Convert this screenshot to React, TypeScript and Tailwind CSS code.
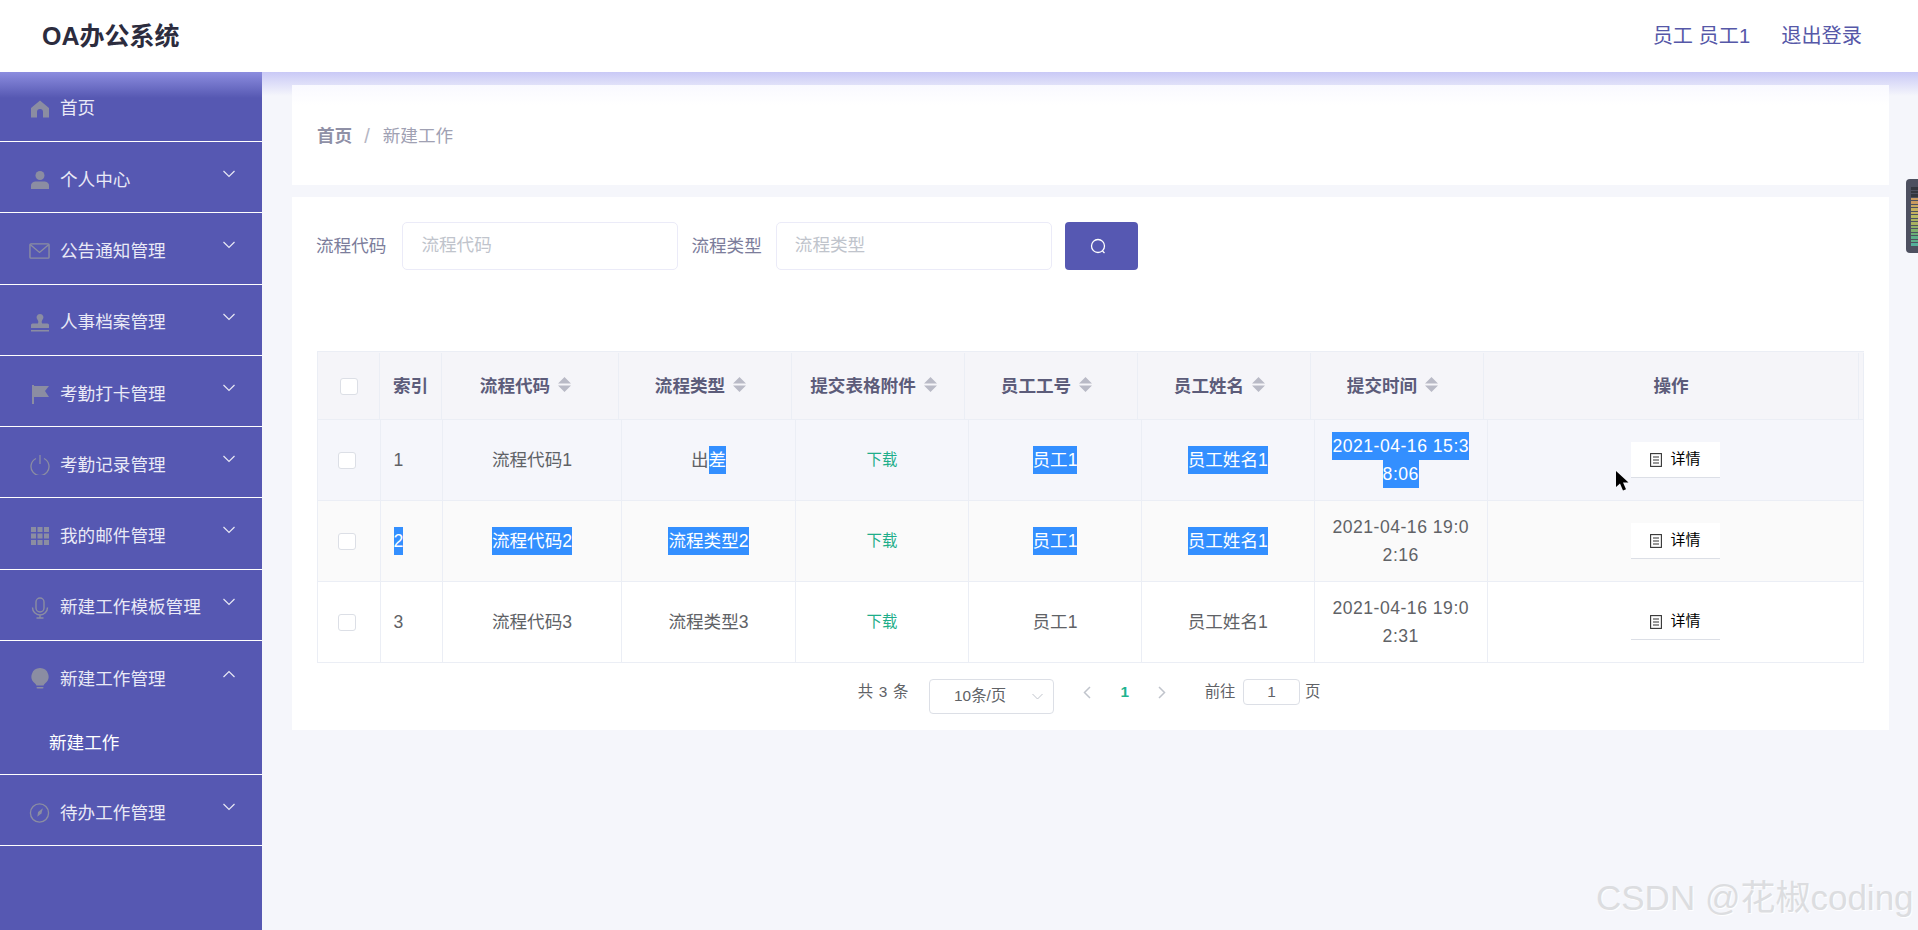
const menuColor = "#8b8da2"

const HomeIcon = () => (
    <svg width="20" height="20" viewBox="0 0 20 20" fill={menuColor}>
        <path d="M10 1.5 1 9v9.5h6V13a3 3 0 0 1 6 0v5.500h6V9z" />
    </svg>
)
const UserIcon = () => (
    <svg width="20" height="20" viewBox="0 0 20 20" fill={menuColor}>
        <circle cx="10" cy="5.500" r="4.500" />
        <path d="M1 19v-3.500C1 13 3.500 11.500 6 11.500h8c2.500 0 5 1.500 5 4V19z" />
    </svg>
)
const MailIcon = () => (
    <svg width="22" height="20" viewBox="0 0 22 20" fill="none" stroke={menuColor} strokeWidth="1.500">
        <rect x="1" y="2.500" width="20" height="15" rx="1" />
        <path d="m1.500 3.500 9.500 8 9.500-8" />
    </svg>
)
const StampIcon = () => (
    <svg width="20" height="20" viewBox="0 0 20 20" fill={menuColor}>
        <path d="M10 1a3.500 3.500 0 0 0-2.200 6.200c.6.600.7 2.300 0 3.300H2.500a1.500 1.500 0 0 0-1.500 1.500V15h18v-3a1.500 1.500 0 0 0-1.500-1.500h-5.300c-.7-1-.6-2.700 0-3.300A3.500 3.500 0 0 0 10 1z" />
        <rect x="1" y="17" width="18" height="1.500" />
    </svg>
)
const FlagIcon = () => (
    <svg width="20" height="20" viewBox="0 0 20 20" fill={menuColor}>
        <path d="M2 1h2v19H2zM4 2h15l-4 5 4 6H4z" />
    </svg>
)
const PowerIcon = () => (
    <svg width="20" height="20" viewBox="0 0 20 20" fill="none" stroke={menuColor} strokeWidth="1.300">
        <path d="M6 3.500a9 9 0 1 0 8 0M10 0v9" />
    </svg>
)
const GridIcon = () => (
    <svg width="20" height="20" viewBox="0 0 20 20" fill={menuColor}>
        <path d="M1 1h5v5H1zM7.500 1h5v5h-5zM14 1h5v5h-5zM1 7.500h5v5H1zM7.500 7.500h5v5h-5zM14 7.500h5v5h-5zM1 14h5v5H1zM7.500 14h5v5h-5zM14 14h5v5h-5z" />
    </svg>
)
const MicIcon = () => (
    <svg width="20" height="22" viewBox="0 0 20 22" fill="none" stroke={menuColor} strokeWidth="1.400">
        <rect x="6" y="1" width="8" height="14" rx="4" />
        <path d="M2.500 10.500a7.500 7.500 0 0 0 15 0M10 18v3M6.500 21h7" />
    </svg>
)
const BulbIcon = () => (
    <svg width="20" height="22" viewBox="0 0 20 22" fill={menuColor}>
        <path d="M10 0a8.500 8.500 0 0 0-5 15.400c.8.600 1.200 1.400 1.300 2.100h7.400c.1-.7.500-1.500 1.300-2.100A8.500 8.500 0 0 0 10 0z" />
        <rect x="6.500" y="19" width="7" height="1.500" rx=".7" />
    </svg>
)
const CompassIcon = () => (
    <svg width="22" height="22" viewBox="0 0 22 22" fill="none" stroke={menuColor} strokeWidth="1.400">
        <circle cx="11" cy="11" r="9.500" />
        <path d="m14.500 6-5 4-.8 5 4.300-3.500z" fill={menuColor} stroke="none" />
    </svg>
)

const menus = [
    { label: "个人中心", icon: <UserIcon /> },
    { label: "公告通知管理", icon: <MailIcon /> },
    { label: "人事档案管理", icon: <StampIcon /> },
    { label: "考勤打卡管理", icon: <FlagIcon /> },
    { label: "考勤记录管理", icon: <PowerIcon /> },
    { label: "我的邮件管理", icon: <GridIcon /> },
    { label: "新建工作模板管理", icon: <MicIcon /> },
]

const MenuRow = ({ label, icon }: { label: string; icon: React.ReactNode }) => (
    <div className="flex h-[71.25px] items-center gap-[10px] border-b border-white pl-[29px] pt-[6px] text-[17.6px] text-[#e9e9f6]">
        <span className="flex w-[21px] justify-center">{icon}</span>
        <span>{label}</span>
        <svg width="12" height="8" viewBox="0 0 12 8" fill="none" stroke="#e8e8f4" strokeWidth="1.200" className="ml-auto mr-[27px] -translate-y-[6px]">
            <path d="M.5 1 6 6.500 11.500 1" />
        </svg>
    </div>
)

const Sel = ({ children }: { children: React.ReactNode }) => (
    <span className="inline-block bg-[#338fff] leading-[28px] text-white">{children}</span>
)

const SortIcon = () => (
    <svg width="13" height="15" viewBox="0 0 13 15" fill="#b9bac6" className="-translate-y-[2px]">
        <path d="M6.500 0 13 6.500H0zM0 8.500h13L6.500 15z" />
    </svg>
)

const Checkbox = () => <span className="block h-[17px] w-[18px] rounded-[3px] border border-[#dcdfe6] bg-white" />

const DetailButton = () => (
    <div className="flex h-[36px] w-[89px] items-center justify-center gap-[8px] border-b border-[#dcdfe6] bg-white text-[15px] text-black">
        <svg width="12" height="14" viewBox="0 0 12 14" fill="none" stroke="#333" strokeWidth="1.100">
            <rect x=".6" y=".6" width="10.800" height="12.800" />
            <path d="M3 4h6M3 7h6M3 10h6" />
        </svg>
        详情
    </div>
)

const headerCols = ["流程代码", "流程类型", "提交表格附件", "员工工号", "员工姓名", "提交时间"]

const rows = [
    {
        bg: "bg-[#f5f6fb]",
        index: "1",
        code: "流程代码1",
        type: <>出<Sel>差</Sel></>,
        no: <Sel>员工1</Sel>,
        name: <Sel>员工姓名1</Sel>,
        time: <><Sel>2021-04-16 15:3</Sel><br /><Sel>8:06</Sel></>,
    },
    {
        bg: "bg-[#fafafa]",
        index: <Sel>2</Sel>,
        code: <Sel>流程代码2</Sel>,
        type: <Sel>流程类型2</Sel>,
        no: <Sel>员工1</Sel>,
        name: <Sel>员工姓名1</Sel>,
        time: <>2021-04-16 19:0<br />2:16</>,
    },
    {
        bg: "bg-white",
        index: "3",
        code: "流程代码3",
        type: "流程类型3",
        no: "员工1",
        name: "员工姓名1",
        time: <>2021-04-16 19:0<br />2:31</>,
    },
]

const cell = "flex items-center justify-center border-r border-[#ebeef5] text-center"

export default function App() {
    return (
        <div className="relative flex h-screen flex-col overflow-hidden bg-[#f5f6fb] font-['Liberation_Sans','Noto_Sans_CJK_SC',sans-serif]">
            <header className="flex h-[72px] shrink-0 items-center justify-between bg-white pl-[42px] pr-[56px] pt-[1px]">
                <h1 className="text-[25px] font-bold text-[#2c2c3e]">OA办公系统</h1>
                <div className="flex gap-[31px] text-[20.200px] text-[#5658a8]">
                    <span>员工 员工1</span>
                    <span>退出登录</span>
                </div>
            </header>

            <div className="flex min-h-0 flex-1">
                <aside className="w-[262px] shrink-0 bg-[#5658b2] bg-[linear-gradient(#8c8ddf,#5658b2_26px)]">
                    <div className="flex h-[70px] items-center gap-[10px] border-b border-white pl-[29px] pt-[4px] text-[17.6px] text-[#e9e9f6]">
                        <span className="flex w-[21px] justify-center"><HomeIcon /></span>
                        <span>首页</span>
                    </div>
                    {menus.map((m) => (
                        <MenuRow key={m.label} label={m.label} icon={m.icon} />
                    ))}
                    <div className="h-[134px] border-b border-white">
                        <div className="flex h-[71.25px] items-center gap-[10px] pl-[29px] pt-[5px] text-[17.6px] text-[#e9e9f6]">
                            <span className="flex w-[21px] justify-center"><BulbIcon /></span>
                            <span>新建工作管理</span>
                            <svg width="12" height="8" viewBox="0 0 12 8" fill="none" stroke="#e8e8f4" strokeWidth="1.200" className="ml-auto mr-[27px] -translate-y-[5px]">
                                <path d="M.5 7 6 1.500 11.500 7" />
                            </svg>
                        </div>
                        <div className="pl-[49px] pt-[18px] text-[17.6px] leading-[26px] text-white">新建工作</div>
                    </div>
                    <MenuRow label="待办工作管理" icon={<CompassIcon />} />
                </aside>

                <main className="flex flex-1 flex-col gap-[12px] bg-[linear-gradient(#c9c9f6,#f5f6fb_24px)] bg-no-repeat pl-[30px] pr-[29px] pt-[13px]">
                    <div className="flex h-[100px] items-center bg-[linear-gradient(#f9f9ff,#ffffff_20px)] pl-[25px] pt-[2px] text-[17.6px]">
                        <span className="mr-[12px] font-bold text-[#8f90a6]">首页</span>
                        <span className="mr-[13px] text-[20px] text-[#b5b6c4]">/</span>
                        <span className="text-[#a0a1b3]">新建工作</span>
                    </div>

                    <div className="h-[533px] bg-white px-[25px] pt-[25px]">
                        <div className="flex h-[48px] items-center text-[17.6px]">
                            <span className="mr-[15px] -translate-x-[1px] text-[#7c7d9b]">流程代码</span>
                            <input placeholder="流程代码" className="mr-[13px] h-[48px] w-[276px] rounded-[5px] border border-[#ebebf8] pb-[2px] pl-[18px] text-[17.6px] placeholder:text-[#c0c4cc]" />
                            <span className="mr-[14px] text-[#7c7d9b]">流程类型</span>
                            <input placeholder="流程类型" className="mr-[13px] h-[48px] w-[276px] rounded-[5px] border border-[#ebebf8] pb-[2px] pl-[18px] text-[17.6px] placeholder:text-[#c0c4cc]" />
                            <button className="flex h-[48px] w-[73px] items-center justify-center rounded-[4px] bg-[#5658b2] pr-[6px]">
                                <svg width="17" height="17" viewBox="0 0 17 17" fill="none" stroke="white" strokeWidth="1.300">
                                    <circle cx="8" cy="8" r="6.500" />
                                    <path d="m12.500 13 2 2" />
                                </svg>
                            </button>
                        </div>

                        <div className="mt-[81px] border-l border-t border-[#ebeef5] text-[17.6px]">
                            <div className="grid h-[68px] grid-cols-[62px_62px_177px_173px_173px_173px_173px_173px_375px_5px] border-b border-[#ebeef5] bg-[#f5f5f9] pt-[1px] font-bold text-[#5c5c7a]">
                                <div className={cell}><Checkbox /></div>
                                <div className={cell}>索引</div>
                                {headerCols.map((h) => (
                                    <div key={h} className={`${cell} gap-[8px] pr-[9px]`}>
                                        {h}
                                        <SortIcon />
                                    </div>
                                ))}
                                <div className={cell}>操作</div>
                                <div className="border-r border-[#ebeef5]" />
                            </div>

                            {rows.map((r, i) => (
                                <div key={i} className={`grid h-[81px] grid-cols-[62.5px_62.5px_179px_174px_173px_173px_172.500px_173.500px_376px] border-b border-[#ebeef5] text-[#606266] ${r.bg}`}>
                                    <div className={`${cell} pr-[4px]`}><Checkbox /></div>
                                    <div className={`${cell} justify-start! pl-[13px]`}>{r.index}</div>
                                    <div className={cell}>{r.code}</div>
                                    <div className={cell}><span>{r.type}</span></div>
                                    <div className={`${cell} text-[15.400px] text-[#1fae8a]`}>下载</div>
                                    <div className={cell}>{r.no}</div>
                                    <div className={cell}>{r.name}</div>
                                    <div className={`${cell} leading-[28px] tracking-[0.5px]`}><span>{r.time}</span></div>
                                    <div className={cell}><DetailButton /></div>
                                </div>
                            ))}
                        </div>

                        <div className="mt-[16px] flex h-[35px] items-center justify-center pr-[2px] text-[15.400px] text-[#606266]">
                            <span className="mb-[9px] mr-[19px] -translate-x-[1px] tracking-[0.7px]">共 3 条</span>
                            <div className="mr-[28.500px] flex h-[35px] w-[125px] items-center rounded-[4px] border border-[#dcdfe6] pb-[1px] pl-[24px]">
                                10条/页
                                <svg width="11" height="7" viewBox="0 0 11 7" fill="none" stroke="#c0c4cc" strokeWidth="1" className="ml-auto mr-[10px]">
                                    <path d="m.5 1 5 5 5-5" />
                                </svg>
                            </div>
                            <svg width="8" height="13" viewBox="0 0 8 13" fill="none" stroke="#c0c4cc" strokeWidth="1.500" className="mb-[9px] mr-[30px]">
                                <path d="M7 1 1.500 6.500 7 12" />
                            </svg>
                            <span className="mb-[9px] mr-[29px] font-bold text-[#1fb48f]">1</span>
                            <svg width="8" height="13" viewBox="0 0 8 13" fill="none" stroke="#c0c4cc" strokeWidth="1.500" className="mb-[9px] mr-[38.500px]">
                                <path d="m1 1 5.500 5.500L1 12" />
                            </svg>
                            <span className="mb-[9px] mr-[7.500px]">前往</span>
                            <div className="mb-[9px] mr-[5px] flex h-[26px] w-[57px] items-center justify-center rounded-[4px] border border-[#dcdfe6]">1</div>
                            <span className="mb-[9px]">页</span>
                        </div>
                    </div>
                </main>
            </div>

            {/* mouse pointer caught in the capture */}
            <svg width="13" height="20" viewBox="0 0 13 20" className="absolute left-[1616px] top-[471px]">
                <path d="M0 0v16l4-3.500 3 7 3-1.300-3-6.700h5.500z" fill="black" />
            </svg>

            {/* floating widget on the right edge */}
            <div className="absolute left-[1906px] top-[179px] flex h-[74px] w-[12px] flex-col gap-[1px] rounded-l-[4px] bg-[#4d5060] pl-[5px] pt-[8px]">
                {["#33363f", "#33363f", "#33363f", "#c99a5f", "#c99a5f", "#c9a85f", "#c4b05f", "#c4b05f", "#b8b860", "#a8b060", "#a8b060", "#8fae66", "#7fae6c", "#6cae78", "#5cae88", "#5cae88", "#54b09a"].map((c, i) => (
                    <span key={i} className="h-[2.500px] w-[7px]" style={{ backgroundColor: c }} />
                ))}
            </div>

            {/* watermark */}
            <div className="absolute left-[1596px] top-[872px] text-[35px] whitespace-nowrap text-[#dcdde0] [text-shadow:1px_1px_1px_#ffffff]">
                CSDN @花椒coding
            </div>
        </div>
    )
}
